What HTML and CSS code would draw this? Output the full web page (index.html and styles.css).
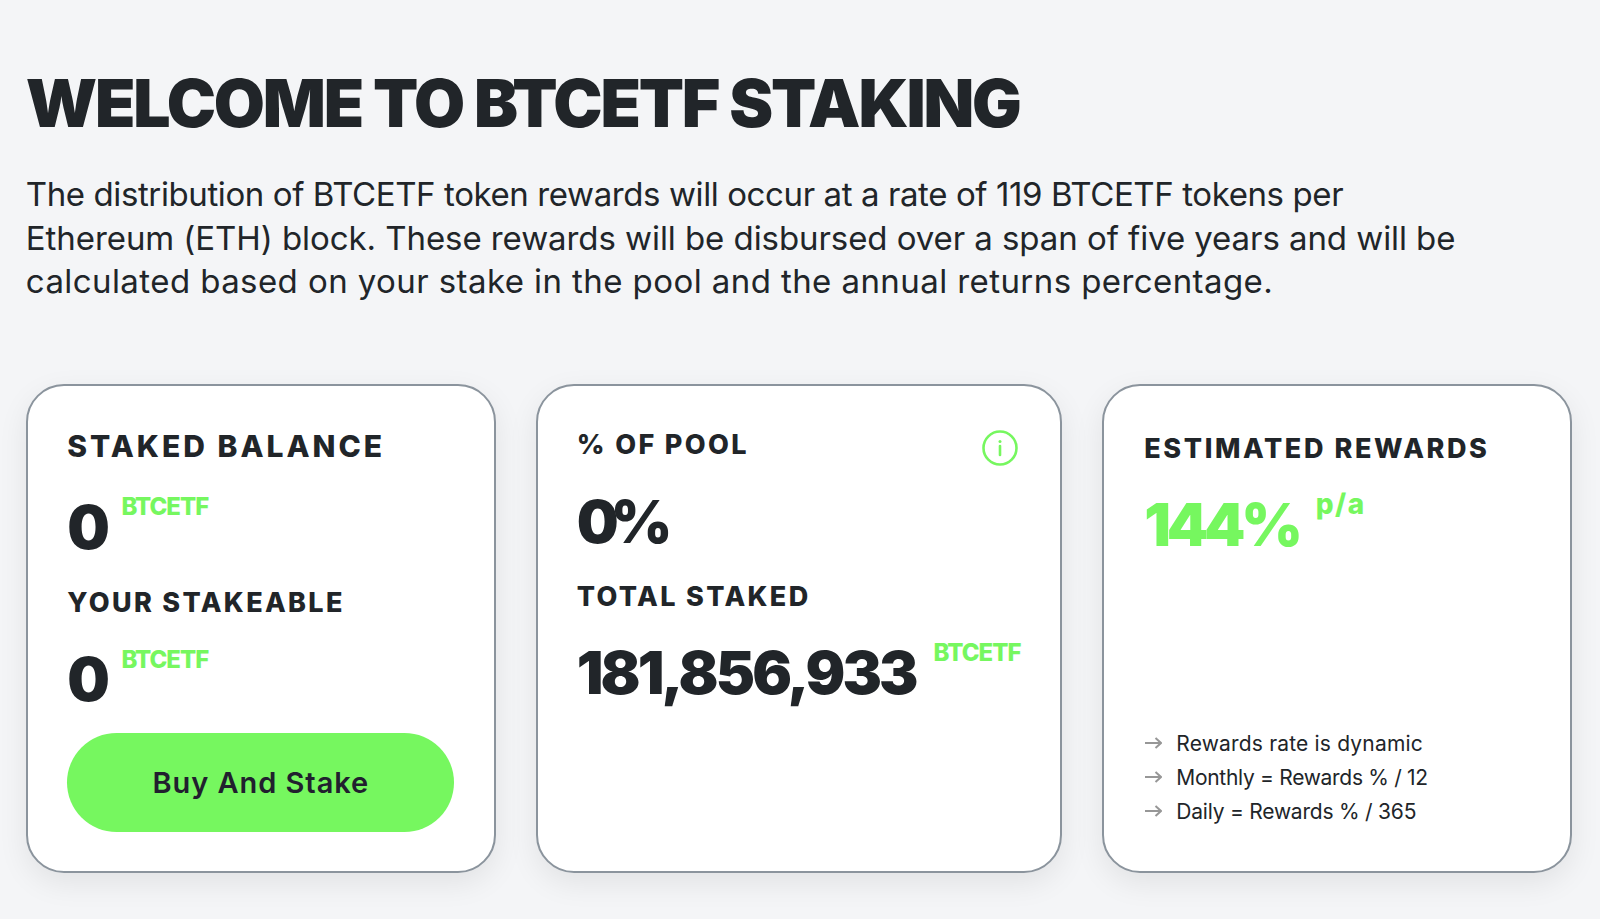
FILE: index.html
```html
<!DOCTYPE html>
<html lang="en">
<head>
<meta charset="utf-8">
<title>BTCETF Staking</title>
<link rel="stylesheet" href="styles.css">
</head>
<body>
<main class="page">
  <h1 class="title">WELCOME TO BTCETF STAKING</h1>
  <p class="intro"><span class="line l1">The distribution of BTCETF token rewards will occur at a rate of 119 BTCETF tokens per</span><span class="line l2">Ethereum (ETH) block. These rewards will be disbursed over a span of five years and will be</span><span class="line l3">calculated based on your stake in the pool and the annual returns percentage.</span></p>
  <section class="cards">
    <article class="card card-balance">
      <h2 class="label label-lg">STAKED BALANCE</h2>
      <div class="stat stat-a"><span class="num">0</span><span class="unit">BTCETF</span></div>
      <h2 class="label label-b">YOUR STAKEABLE</h2>
      <div class="stat stat-b"><span class="num">0</span><span class="unit">BTCETF</span></div>
      <button class="cta">Buy And Stake</button>
    </article>
    <article class="card card-pool">
      <div class="pool-head">
        <h2 class="label">% OF POOL</h2>
        <svg class="info" viewBox="0 0 36 36" aria-hidden="true"><circle cx="18" cy="18" r="16.5" fill="none" stroke="#76f75f" stroke-width="2.6"/><path d="M18 16v9" stroke="#76f75f" stroke-width="2.6" stroke-linecap="round"/><circle cx="18" cy="11.5" r="1.5" fill="#76f75f"/></svg>
      </div>
      <div class="stat stat-c"><span class="num num-pct">0%</span></div>
      <h2 class="label label-c">TOTAL STAKED</h2>
      <div class="stat stat-d"><span class="num num-total">181,856,933</span><span class="unit unit-d">BTCETF</span></div>
    </article>
    <article class="card card-rewards">
      <h2 class="label label-est">ESTIMATED REWARDS</h2>
      <div class="stat stat-e"><span class="num num-rate">144%</span><span class="pa">p/a</span></div>
      <ul class="notes">
        <li class="n1"><svg class="arrow" viewBox="0 0 18 14" aria-hidden="true"><path d="M1 6h16M11.5 1l5.5 5-5.5 5" fill="none" stroke="#979797" stroke-width="2"/></svg>Rewards rate is dynamic</li>
        <li class="n2"><svg class="arrow" viewBox="0 0 18 14" aria-hidden="true"><path d="M1 6h16M11.5 1l5.5 5-5.5 5" fill="none" stroke="#979797" stroke-width="2"/></svg>Monthly = Rewards % / 12</li>
        <li class="n3"><svg class="arrow" viewBox="0 0 18 14" aria-hidden="true"><path d="M1 6h16M11.5 1l5.5 5-5.5 5" fill="none" stroke="#979797" stroke-width="2"/></svg>Daily = Rewards % / 365</li>
      </ul>
    </article>
  </section>
</main>
</body>
</html>
```
FILE: styles.css
```css
* { box-sizing: border-box; }
html, body { margin: 0; height: 100%; }
body {
  background: #f4f5f7;
  color: #212529;
  font-family: "Inter", "Liberation Sans", sans-serif;
  overflow: hidden;
}
.page { padding: 65px 28px 0 25.8px; }
.title {
  margin: 0;
  font-size: 66px;
  line-height: 76px;
  font-weight: 900;
  letter-spacing: -2.15px;
}
.intro {
  margin: 32px 0 0;
  font-size: 33px;
  line-height: 43.5px;
  font-weight: 400;
  white-space: nowrap;
}
.line { display: block; }
.l1 { letter-spacing: -.4px; }
.l2 { letter-spacing: -.07px; }
.l3 { letter-spacing: .42px; }
.cards {
  display: grid;
  grid-template-columns: 470px 526px 470px;
  column-gap: 40px;
  margin-top: 80px;
}
.card {
  height: 489px;
  background: #fff;
  border: 2px solid #8b949d;
  border-radius: 38px;
  box-shadow: 0 10px 30px rgba(0, 0, 0, .08);
  padding: 0 39.5px;
  display: flex;
  flex-direction: column;
}
.card-pool { padding: 0 39px; }
.card-rewards { padding: 0 40.5px; }
.label {
  margin: 0;
  font-size: 27px;
  line-height: 34px;
  font-weight: 800;
  letter-spacing: 2.35px;
  white-space: nowrap;
}
.label-lg { font-size: 30px; letter-spacing: 3px; margin-top: 43px; }
.label-est { margin-top: 46px; letter-spacing: 2.6px; }
.stat { display: flex; align-items: flex-start; white-space: nowrap; }
.num { font-size: 60px; line-height: 70px; font-weight: 900; letter-spacing: -.5px; }
.num-pct { font-size: 59px; letter-spacing: -8px; }
.num-total { font-size: 59px; letter-spacing: -2.9px; }
.num-rate { font-size: 59px; color: #76f75f; letter-spacing: -4.2px; }
.unit { color: #76f75f; font-size: 24px; line-height: 30px; font-weight: 800; margin-left: 12px; letter-spacing: -1px; }
.stat-a { margin-top: 29px; }
.label-b { margin-top: 24px; }
.stat-b { margin-top: 24px; }
.stat-b .unit { margin-top: 1px; }
.cta {
  margin-top: 19px;
  width: 387px;
  height: 99px;
  border: 0;
  border-radius: 50px;
  background: #76f75f;
  color: #21202e;
  font: 600 29px "Inter", sans-serif;
  letter-spacing: .95px;
}
.pool-head { display: flex; justify-content: space-between; align-items: flex-start; padding-top: 42px; }
.info { width: 36px; height: 36px; margin: 2px 3px 0 0; flex: none; }
.stat-c { margin-top: 21px; }
.label-c { margin-top: 23px; }
.stat-d { margin-top: 24px; }
.unit-d { margin-left: 18px; }
.stat-e { margin-top: 24px; }
.pa { color: #76f75f; font-size: 28px; line-height: 34px; font-weight: 800; margin: -3px 0 0 17px; letter-spacing: 1.5px; }
.notes {
  list-style: none;
  margin: auto 0 42px;
  padding: 0;
  font-size: 21px;
  line-height: 34px;
}
.notes li { display: flex; align-items: center; white-space: nowrap; }
.n1 { letter-spacing: .18px; }
.n2 { letter-spacing: -.3px; }
.n3 { letter-spacing: -.22px; }
.arrow { width: 18px; height: 14px; margin-right: 14px; flex: none; }
```
